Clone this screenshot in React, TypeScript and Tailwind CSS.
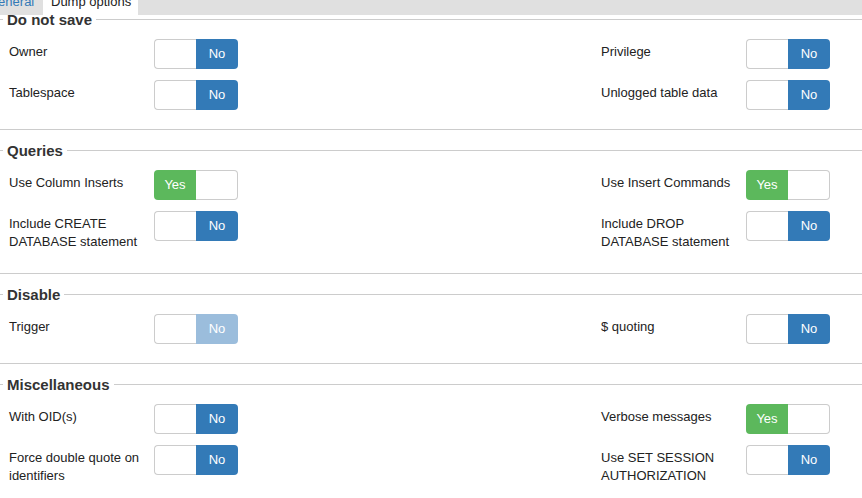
import React from "react";

type Item = { label: string; on?: boolean; disabled?: boolean };

function Toggle({ on, disabled }: { on?: boolean; disabled?: boolean }) {
  if (on) {
    return (
      <div className="flex w-[84px] h-[30px] shrink-0">
        <div className="w-[42px] bg-[#5cb85c] rounded-l-[4px] flex items-center justify-center text-white text-[13px]">
          Yes
        </div>
        <div className="flex-1 border border-l-0 border-[#cccccc] rounded-r-[4px] bg-white" />
      </div>
    );
  }
  return (
    <div className="flex w-[84px] h-[30px] shrink-0">
      <div className="w-[42px] border border-r-0 border-[#cccccc] rounded-l-[4px] bg-white" />
      <div
        className={
          "flex-1 rounded-r-[4px] flex items-center justify-center text-white text-[13px] " +
          (disabled ? "bg-[#9bbddc]" : "bg-[#337ab7]")
        }
      >
        No
      </div>
    </div>
  );
}

function Cell({ item }: { item?: Item }) {
  if (!item) return <div />;
  return (
    <div className="flex items-start pl-[9px]">
      <div className="w-[145px] pr-[8px] pt-[4px] pb-[3px] leading-[18px] text-[13px] text-[#222]">{item.label}</div>
      <Toggle on={item.on} disabled={item.disabled} />
    </div>
  );
}

function Section({
  title,
  rows,
  first,
}: {
  title: string;
  rows: [Item, Item?][];
  first?: boolean;
}) {
  return (
    <div className={"border-b border-[#cccccc] pb-[19px] " + (first ? "" : "pt-[13px]")}>
      <div className="flex items-start h-[15px]">
        <div className="w-[3px] h-px mt-[7px] bg-[#cccccc]" />
        <div className="px-[4px] text-[15px] leading-[15px] font-bold text-[#333]">{title}</div>
        <div className="flex-1 h-px mt-[7px] bg-[#cccccc]" />
      </div>
      <div className="grid grid-cols-[592px_1fr] gap-y-[11px] mt-[12px]">
        {rows.map((r, i) => (
          <React.Fragment key={i}>
            <Cell item={r[0]} />
            <Cell item={r[1]} />
          </React.Fragment>
        ))}
      </div>
    </div>
  );
}

export default function App() {
  return (
    <div className="w-[862px] h-[498px] overflow-hidden bg-white font-['Liberation_Sans',Arial,sans-serif]">
      <div className="relative z-10 h-[15px] bg-[#e0e0e0] flex overflow-hidden">
        <div className="-ml-[20px] w-[62px] px-[8px] text-[13px] leading-[20px] -mt-[8px] text-[#337ab7]">General</div>
        <div className="ml-[1px] w-[95px] h-[15px] bg-white px-[8px] overflow-hidden">
          <div className="text-[13px] leading-[20px] -mt-[8px] text-[#222] whitespace-nowrap">Dump options</div>
        </div>
      </div>
      <div className="-mt-[3px]">
        <Section
          first
          title="Do not save"
          rows={[
            [{ label: "Owner" }, { label: "Privilege" }],
            [{ label: "Tablespace" }, { label: "Unlogged table data" }],
          ]}
        />
        <Section
          title="Queries"
          rows={[
            [{ label: "Use Column Inserts", on: true }, { label: "Use Insert Commands", on: true }],
            [{ label: "Include CREATE DATABASE statement" }, { label: "Include DROP DATABASE statement" }],
          ]}
        />
        <Section
          title="Disable"
          rows={[[{ label: "Trigger", disabled: true }, { label: "$ quoting" }]]}
        />
        <Section
          title="Miscellaneous"
          rows={[
            [{ label: "With OID(s)" }, { label: "Verbose messages", on: true }],
            [{ label: "Force double quote on identifiers" }, { label: "Use SET SESSION AUTHORIZATION" }],
          ]}
        />
      </div>
    </div>
  );
}
